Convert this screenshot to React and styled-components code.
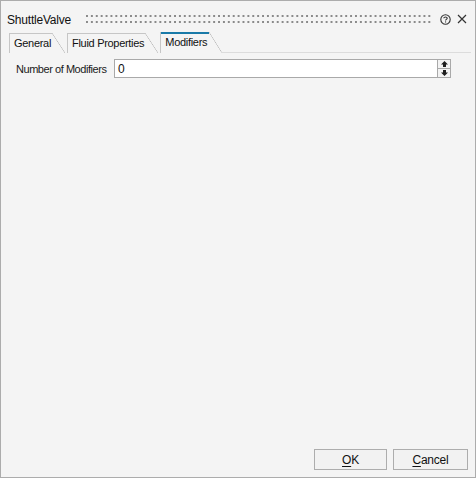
import React from "react"
import styled, { createGlobalStyle } from "styled-components"

const GlobalStyle = createGlobalStyle`
  html, body {
    margin: 0;
    padding: 0;
    background: #f4f4f4;
  }
  * {
    box-sizing: border-box;
  }
`

const Arrow = ({ down }) => (
  <svg width="7" height="6" viewBox="0 0 7 6" style={down ? { transform: "scaleY(-1)" } : null}>
    <path d="M3.5 0 L7 3.5 L5 3.5 L5 6 L2 6 L2 3.5 L0 3.5 Z" fill="#1e1e1e" />
  </svg>
)

const HelpIcon = () => (
  <svg width="11" height="11" viewBox="0 0 11 11">
    <circle cx="5.5" cy="5.5" r="4.7" fill="none" stroke="#333" strokeWidth="1.1" />
    <path d="M3.8 4.3 C3.8 2.6 7.2 2.6 7.2 4.3 C7.2 5.4 5.5 5.3 5.5 6.6" fill="none" stroke="#333" strokeWidth="1.1" />
    <rect x="5" y="7.4" width="1.1" height="1.1" fill="#333" />
  </svg>
)

const CloseIcon = () => (
  <svg width="10" height="10" viewBox="0 0 10 10">
    <path d="M1 1 L9 9 M9 1 L1 9" stroke="#333" strokeWidth="1.2" />
  </svg>
)

const App = () => {
  const tabs = ["General", "Fluid Properties", "Modifiers"]
  const active = 2

  return (
    <>
      <GlobalStyle />
      <Dialog>
        <TitleBar>
          <Title>ShuttleValve</Title>
          <Grip />
          <IconButton><HelpIcon /></IconButton>
          <IconButton><CloseIcon /></IconButton>
        </TitleBar>

        <TabStrip>
          {tabs.map((t, i) => (
            <Tab key={t} active={i === active}>{t}</Tab>
          ))}
          <TabFiller />
        </TabStrip>

        <Body>
          <FieldRow>
            <Label>Number of Modifiers</Label>
            <Input>0</Input>
            <Spinner>
              <SpinButton><Arrow /></SpinButton>
              <SpinButton><Arrow down /></SpinButton>
            </Spinner>
          </FieldRow>
        </Body>

        <Footer>
          <Button width={73}><u>O</u>K</Button>
          <Button width={75}><u>C</u>ancel</Button>
        </Footer>
      </Dialog>
    </>
  )
}

export default App

const Dialog = styled.div`
  width: 476px;
  height: 478px;
  border: 1px solid #acacac;
  background: #f4f4f4;
  display: flex;
  flex-direction: column;
  font-family: "Liberation Sans", Arial, sans-serif;
  font-size: 11px;
  letter-spacing: -0.3px;
  color: #1a1a1a;
`

const TitleBar = styled.div`
  display: flex;
  align-items: center;
  height: 22px;
  margin-top: 7px;
  padding: 0 6px 0 6px;
`

const Title = styled.div`
  font-size: 12px;
  letter-spacing: -0.2px;
  padding-top: 1px;
  color: #111;
`

// dotted drag grip between title and the help/close icons
const Grip = styled.div`
  flex: 1;
  height: 8px;
  margin: 0 6px 1px 15px;
  background-image: radial-gradient(circle at 1px 1px, #8a8a8a 1.1px, transparent 1.5px);
  background-size: 4.9px 6px;
  background-repeat: repeat;
`

const IconButton = styled.div`
  width: 15px;
  height: 16px;
  display: flex;
  align-items: center;
  justify-content: center;
  margin-left: 1px;
`

const TabStrip = styled.div`
  display: flex;
  align-items: flex-end;
  height: 21px;
  margin: 2px 4px 0 8px;
  gap: 3px;
`

const Tab = styled.div`
  height: ${({ active }) => (active ? "21px" : "20px")};
  padding: ${({ active }) => (active ? "4px 15px 0 4px" : "4px 14px 0 4px")};
  border-left: 1px solid #c6c6c6;
  color: #111;
  background:
    linear-gradient(${({ active }) => (active ? "#1a7aa8, #1a7aa8" : "#c6c6c6, #c6c6c6")})
      left top / calc(100% - 13px) ${({ active }) => (active ? "2px" : "1px")} no-repeat,
    linear-gradient(to top right, transparent calc(50% - 0.6px), #bdbdbd 50%, transparent calc(50% + 0.6px))
      right top / 13px 100% no-repeat;
  margin-right: -1px;
`

const TabFiller = styled.div`
  flex: 1;
  align-self: stretch;
  border-bottom: 1px solid #dcdcdc;
  margin-left: -3px;
`

const Body = styled.div`
  flex: 1;
  padding: 6px 24px 0 15px;
`

const FieldRow = styled.div`
  display: flex;
  align-items: center;
  height: 19px;
`

const Label = styled.div`
  width: 98px;
  padding-top: 1px;
  letter-spacing: -0.45px;
`

const Input = styled.div`
  flex: 1;
  height: 19px;
  background: #fff;
  border: 1px solid #a9a9a9;
  padding: 2px 3px 0 3px;
  font-size: 12px;
  color: #111;
`

const Spinner = styled.div`
  width: 13px;
  height: 19px;
  display: flex;
  flex-direction: column;
`

const SpinButton = styled.div`
  flex: 1;
  display: flex;
  align-items: center;
  justify-content: center;
  border: 1px solid #a9a9a9;
  border-left: none;
  background: #f3f3f3;

  & + & {
    border-top: none;
  }
`

const Footer = styled.div`
  display: flex;
  justify-content: flex-end;
  gap: 6px;
  padding: 0 7px 7px 0;
`

const Button = styled.div`
  width: ${({ width }) => width}px;
  height: 21px;
  display: flex;
  align-items: center;
  justify-content: center;
  border: 1px solid #adadad;
  background: #f2f2f2;
  font-size: 12px;
  letter-spacing: -0.2px;
  color: #111;

  u {
    text-decoration-thickness: 1px;
    text-underline-offset: 2px;
  }
`
